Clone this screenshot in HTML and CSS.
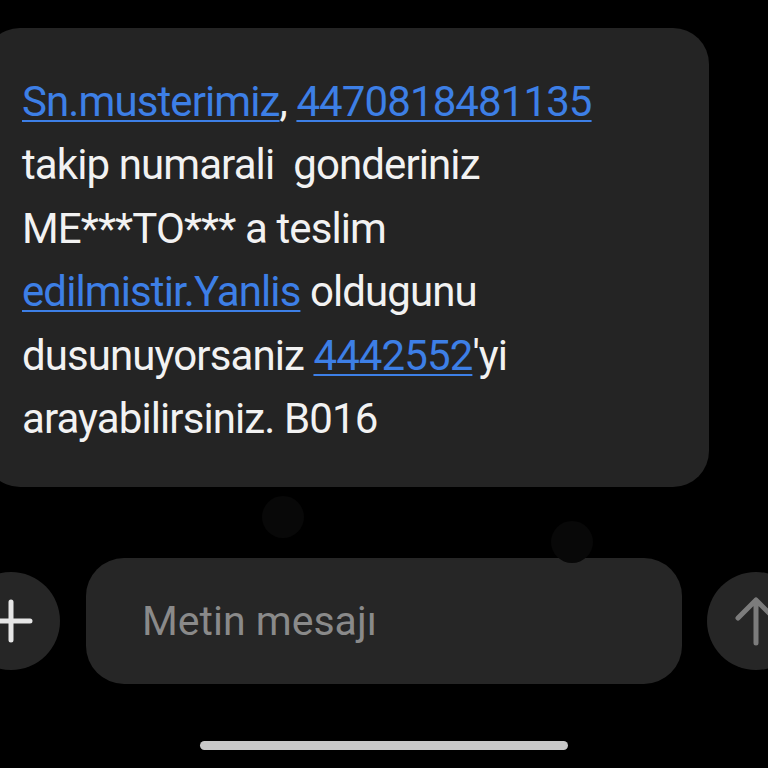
FILE: index.html
```html
<!DOCTYPE html>
<html lang="tr">
<head>
<meta charset="utf-8">
<title>Mesaj</title>
<link rel="stylesheet" href="styles.css">
</head>
<body>
<div class="screen">
  <div class="bubble">
    <p class="msg"><a class="link">Sn.musterimiz</a>, <a class="link">4470818481135</a><br>takip numarali&nbsp; gonderiniz<br>ME***TO*** a teslim<br><a class="link">edilmistir.Yanlis</a> oldugunu<br>dusunuyorsaniz <a class="link">4442552</a>'yi<br>arayabilirsiniz. B016</p>
  </div>
  <div class="spacer">
    <span class="spot spot-a"></span>
    <span class="spot spot-b"></span>
  </div>
  <div class="composer">
    <div class="round-btn plus">
      <svg width="44" height="44" viewBox="0 0 44 44"><path d="M22 3 V41 M3 22 H41" stroke="#e6e6e6" stroke-width="5" stroke-linecap="round" fill="none"/></svg>
    </div>
    <div class="input"><span class="placeholder">Metin mesajı</span></div>
    <div class="round-btn send">
      <svg width="44" height="50" viewBox="0 0 44 50"><path d="M22 47 V4 M4 22 L22 4 L40 22" stroke="#7c7c7c" stroke-width="5" stroke-linecap="round" stroke-linejoin="round" fill="none"/></svg>
    </div>
  </div>
  <div class="home-bar"></div>
</div>
</body>
</html>
```
FILE: styles.css
```css
html, body {
  margin: 0;
  padding: 0;
  background: #000;
}
body {
  width: 768px;
  height: 768px;
  overflow: hidden;
  font-family: Roboto, "Noto Sans", "Liberation Sans", sans-serif;
}
.screen {
  display: flex;
  flex-direction: column;
  padding-top: 28px;
}
.bubble {
  margin-left: -16px;
  width: 725px;
  box-sizing: border-box;
  height: 459px;
  background: #242424;
  border-radius: 36px;
  padding: 42px 0 0 38px;
}
.msg {
  margin: 0;
  font-size: 42px;
  line-height: 63.4px;
  letter-spacing: -0.9px;
  color: #f2f2f2;
  white-space: nowrap;
}
.link {
  color: #3d7fe6;
  text-decoration: underline;
  text-decoration-thickness: 2px;
  text-underline-offset: 4px;
}
.spacer {
  position: relative;
  height: 71px;
}
.spot {
  position: absolute;
  width: 42px;
  height: 42px;
  border-radius: 50%;
  background: #080808;
}
.spot-a { left: 262px; top: 9px; }
.spot-b { left: 551px; top: 34px; }
.composer {
  display: flex;
  align-items: center;
  gap: 26px;
  margin-left: -38px;
  height: 126px;
}
.round-btn {
  flex: none;
  width: 98px;
  height: 98px;
  border-radius: 50%;
  background: #262626;
  display: flex;
  align-items: center;
  justify-content: center;
}
.input {
  flex: none;
  width: 596px;
  height: 126px;
  box-sizing: border-box;
  border-radius: 38px;
  background: #262626;
  display: flex;
  align-items: center;
  padding-left: 56px;
}
.send { margin-left: -1px; }
.placeholder {
  font-size: 41px;
  color: #8a8a8a;
}
.home-bar {
  margin: 57px 0 0 200px;
  width: 368px;
  height: 9px;
  border-radius: 5px;
  background: #c8c8c8;
}
```
